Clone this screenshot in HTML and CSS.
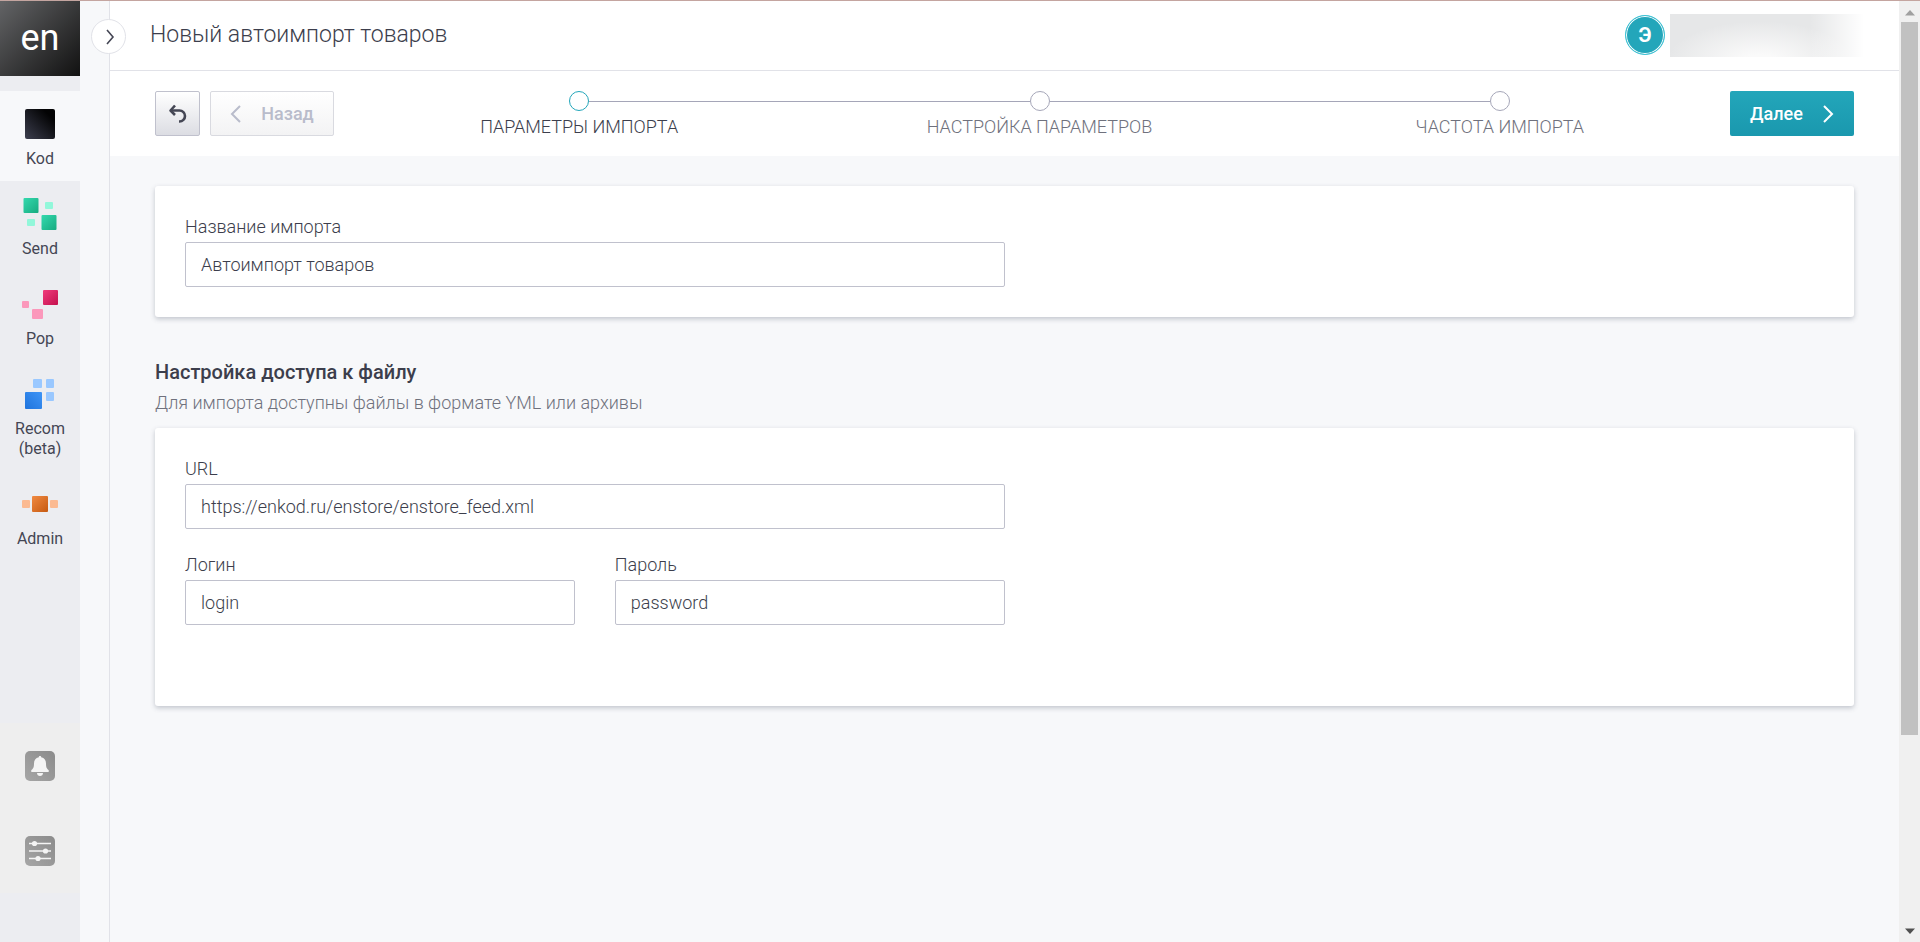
FILE: index.html
```html
<!DOCTYPE html>
<html lang="ru">
<head>
    <meta charset="UTF-8">
    <meta name="viewport" content="width=device-width, initial-scale=1.0">
    <title>Новый автоимпорт товаров</title>
    <link rel="stylesheet" href="styles.css">
</head>
<body>
    <div class="app">
        <nav class="sidebar">
            <a class="logo" href="#">en</a>
            <ul class="menu">
                <li>
                    <a class="menu-item active" href="#">
                        <svg class="menu-icon" viewBox="0 0 36 36">
                            <defs><linearGradient id="kod" x1="0" y1="1" x2="1" y2="0"><stop offset="0" stop-color="#3c3e4e"/><stop offset="0.8" stop-color="#030304"/></linearGradient></defs>
                            <rect x="3" y="3" width="30" height="30" rx="2" fill="url(#kod)"/>
                        </svg>
                        <span>Kod</span>
                    </a>
                </li>
                <li>
                    <a class="menu-item" href="#">
                        <svg class="menu-icon" viewBox="0 0 36 36">
                            <defs><linearGradient id="send" x1="0" y1="0" x2="1" y2="1"><stop offset="0" stop-color="#34d9ae"/><stop offset="1" stop-color="#17ab80"/></linearGradient></defs>
                            <rect x="1.500" y="2" width="15" height="15" rx="1" fill="url(#send)"/>
                            <rect x="19.500" y="19" width="15" height="15" rx="1" fill="url(#send)"/>
                            <rect x="23" y="6" width="8" height="7" rx="1" fill="#92f7da"/>
                            <rect x="5" y="23" width="8" height="7" rx="1" fill="#92f7da"/>
                        </svg>
                        <span>Send</span>
                    </a>
                </li>
                <li>
                    <a class="menu-item" href="#">
                        <svg class="menu-icon" viewBox="0 0 36 36">
                            <defs><linearGradient id="pop" x1="0" y1="0" x2="1" y2="1"><stop offset="0" stop-color="#f03c7c"/><stop offset="1" stop-color="#c4104e"/></linearGradient></defs>
                            <rect x="21" y="4" width="15" height="15" rx="1" fill="url(#pop)"/>
                            <rect x="0" y="15" width="7" height="7" rx="1" fill="#fb98bb"/>
                            <rect x="10" y="23" width="11" height="10" rx="1" fill="#fb98bb"/>
                        </svg>
                        <span>Pop</span>
                    </a>
                </li>
                <li>
                    <a class="menu-item" href="#">
                        <svg class="menu-icon" viewBox="0 0 36 36">
                            <defs><linearGradient id="recom" x1="0" y1="1" x2="1" y2="0"><stop offset="0" stop-color="#1f74dd"/><stop offset="1" stop-color="#3e94f6"/></linearGradient></defs>
                            <rect x="3" y="16" width="17" height="17" rx="1" fill="url(#recom)"/>
                            <rect x="11" y="3" width="9" height="9" rx="1" fill="#9ac8ff"/>
                            <rect x="24" y="3" width="8" height="9" rx="1" fill="#9ac8ff"/>
                            <rect x="24" y="16" width="8" height="9" rx="1" fill="#9ac8ff"/>
                        </svg>
                        <span>Recom (beta)</span>
                    </a>
                </li>
                <li>
                    <a class="menu-item" href="#">
                        <svg class="menu-icon" viewBox="0 0 36 36">
                            <defs><linearGradient id="admin" x1="0" y1="0" x2="1" y2="1"><stop offset="0" stop-color="#f08a42"/><stop offset="1" stop-color="#c65a12"/></linearGradient></defs>
                            <rect x="10" y="10" width="16" height="16" rx="1" fill="url(#admin)"/>
                            <rect x="0" y="14" width="8" height="8" rx="1" fill="#fbba92"/>
                            <rect x="28" y="14" width="8" height="8" rx="1" fill="#fbba92"/>
                        </svg>
                        <span>Admin</span>
                    </a>
                </li>
            </ul>
            <div class="tools">
                <button class="tool" type="button" aria-label="Уведомления">
                    <svg viewBox="0 0 30 30" width="30" height="30">
                        <defs><linearGradient id="tool" x1="1" y1="0" x2="0" y2="1"><stop offset="0" stop-color="#8b8b8b"/><stop offset="1" stop-color="#a6a6a6"/></linearGradient></defs>
                        <rect width="30" height="30" rx="5" fill="url(#tool)"/>
                        <path d="M15 5c.8 0 1.200.5 1.200 1.300C19.500 7 21 9.500 21 12.500c0 4 .8 5 2.500 6.500.6.600.4 2-.5 2H7c-.9 0-1.100-1.400-.5-2C8.200 17.500 9 16.500 9 12.500c0-3 1.500-5.500 4.800-6.200C13.800 5.500 14.200 5 15 5z" fill="#f4f4f4"/>
                        <path d="M12 22h6c0 1.700-1.300 3-3 3s-3-1.300-3-3z" fill="#f4f4f4"/>
                    </svg>
                </button>
                <button class="tool" type="button" aria-label="Настройки">
                    <svg viewBox="0 0 30 30" width="30" height="30">
                        <rect width="30" height="30" rx="5" fill="url(#tool)"/>
                        <path d="M4 7.500h22M4 15h22M4 22.500h22" stroke="#f4f4f4" stroke-width="1.600"/>
                        <circle cx="9.500" cy="7.500" r="2.600" fill="#f4f4f4"/>
                        <circle cx="20.500" cy="15" r="2.600" fill="#f4f4f4"/>
                        <circle cx="13" cy="22.500" r="2.600" fill="#f4f4f4"/>
                    </svg>
                </button>
            </div>
        </nav>

        <div class="rail">
            <button class="rail-toggle" type="button" aria-label="Развернуть меню">
                <svg viewBox="0 0 10 16" width="10" height="16"><path d="M2 1l6 7-6 7" fill="none" stroke="#444654" stroke-width="1.600"/></svg>
            </button>
        </div>

        <main class="main">
            <header class="header">
                <h1>Новый автоимпорт товаров</h1>
                <div class="user">
                    <div class="avatar">Э</div>
                    <div class="user-name"></div>
                </div>
            </header>

            <div class="toolbar">
                <button class="btn btn-undo" type="button" aria-label="Отменить">
                    <svg viewBox="0 0 20 20" width="20" height="20" fill="none" stroke="#444654" stroke-width="2.600"><path d="M3 6.500h8.500a5.500 5.500 0 0 1 0 11H11"/><path d="M7 1.500L2.500 6.500L7 11" stroke-linejoin="round"/></svg>
                </button>
                <button class="btn btn-back" type="button" disabled>
                    <svg viewBox="0 0 12 18" width="12" height="18" fill="none" stroke="currentColor" stroke-width="2"><path d="M10 1L2 9l8 8"/></svg>
                    Назад
                </button>
                <ol class="steps">
                    <li class="step current">
                        <div class="track"><span class="dot"></span></div>
                        Параметры импорта
                    </li>
                    <li class="step">
                        <div class="track"><span class="dot"></span></div>
                        Настройка параметров
                    </li>
                    <li class="step">
                        <div class="track"><span class="dot"></span></div>
                        Частота импорта
                    </li>
                </ol>
                <button class="btn btn-next" type="button">
                    Далее
                    <svg viewBox="0 0 12 18" width="12" height="18" fill="none" stroke="currentColor" stroke-width="2"><path d="M2 1l8 8-8 8"/></svg>
                </button>
            </div>

            <form class="content">
                <section class="card">
                    <div class="fields">
                        <div class="field wide">
                            <label for="name">Название импорта</label>
                            <input id="name" type="text" value="Автоимпорт товаров">
                        </div>
                    </div>
                </section>

                <h2>Настройка доступа к файлу</h2>
                <p class="hint">Для импорта доступны файлы в формате YML или архивы</p>

                <section class="card card-access">
                    <div class="fields">
                        <div class="field wide">
                            <label for="url">URL</label>
                            <input id="url" type="text" value="https://enkod.ru/enstore/enstore_feed.xml">
                        </div>
                        <div class="field">
                            <label for="login">Логин</label>
                            <input id="login" type="text" value="login">
                        </div>
                        <div class="field">
                            <label for="password">Пароль</label>
                            <input id="password" type="text" value="password">
                        </div>
                    </div>
                </section>
            </form>
        </main>

        <div class="scrollbar">
            <svg viewBox="0 0 10 6" width="10" height="6"><path d="M0 5.500L5 0l5 5.500z" fill="#a0a0a0"/></svg>
            <div class="scroll-track"><div class="scroll-thumb"></div></div>
            <svg viewBox="0 0 10 6" width="10" height="6"><path d="M0 .5L5 6l5-5.500z" fill="#505050"/></svg>
        </div>
    </div>
</body>
</html>
```
FILE: styles.css
```css
* {
    box-sizing: border-box;
}
body {
    margin: 0;
    font-family: Roboto, sans-serif;
    font-size: 18px;
    font-weight: 350;
    line-height: 20px;
    color: #3c3e4c;
    background-color: #f7f8fa;
}
h1, h2, p, ul, ol {
    margin: 0;
    padding: 0;
    font-weight: 350;
}
ul, ol {
    list-style: none;
}
button, input {
    font: inherit;
    color: inherit;
}
svg {
    display: block;
}
.app {
    display: flex;
    min-height: 100vh;
    border-top: 1px solid #c4a5a0;
}

/* left menu */
.sidebar {
    display: flex;
    flex-direction: column;
    width: 80px;
    padding-bottom: 49px;
    background-color: #ecedf1;
}
.logo {
    height: 75px;
    margin-bottom: 15px;
    font-size: 36px;
    font-weight: 400;
    line-height: 74px;
    text-align: center;
    text-decoration: none;
    color: #fff;
    background: linear-gradient(135deg, #636466, #111);
}
.menu-item {
    display: flex;
    flex-direction: column;
    align-items: center;
    gap: 7px;
    min-height: 90px;
    padding: 15px 10px 12px;
    font-size: 16px;
    font-weight: 400;
    text-align: center;
    text-decoration: none;
    color: #444654;
}
.menu-item.active {
    background-color: #f7f8fa;
}
.menu-icon {
    width: 36px;
    height: 36px;
}
.tools {
    margin-top: auto;
    background-color: #eee;
}
.tool {
    display: flex;
    align-items: center;
    justify-content: center;
    width: 100%;
    height: 85px;
    padding: 0;
    border: 0;
    background: none;
}
.rail {
    position: relative;
    width: 30px;
    border-right: 1px solid #e1e2e8;
}
.rail-toggle {
    position: absolute;
    top: 18px;
    right: -17px;
    display: flex;
    align-items: center;
    justify-content: center;
    width: 35px;
    height: 35px;
    padding: 0 0 0 3px;
    border: 1px solid #e1e2e8;
    border-radius: 50%;
    background-color: #fff;
}

/* page */
.main {
    flex: 1;
}
.header {
    display: flex;
    align-items: center;
    justify-content: space-between;
    height: 70px;
    padding: 0 29px 1px 40px;
    border-bottom: 1px solid #e1e2e8;
    background-color: #fff;
}
h1 {
    padding-bottom: 1px;
    font-size: 23px;
    line-height: 28px;
}
.user {
    display: flex;
    align-items: center;
    gap: 5px;
}
.avatar {
    width: 40px;
    height: 40px;
    border: 1px solid #3fc3d5;
    border-radius: 50%;
    font-size: 20px;
    font-weight: 700;
    line-height: 38px;
    text-align: center;
    color: #fff;
    background-color: #23a6ba;
    box-shadow: inset 0 0 0 1px #fff;
}
.user-name {
    width: 200px;
    height: 43px;
    background: linear-gradient(90deg, transparent 70%, #fff 97%), radial-gradient(ellipse at 45% 110%, #fafafa 10%, transparent 60%), #e6e7e8;
}
.toolbar {
    display: flex;
    padding: 20px 45px;
    background-color: #fff;
}
.btn {
    display: flex;
    align-items: center;
    justify-content: center;
    gap: 19px;
    width: 124px;
    height: 45px;
    padding: 0;
    border: 1px solid #c0c1cd;
    border-radius: 2px;
    font-weight: 500;
    background: linear-gradient(#fff, #dcdde3);
}
.btn-undo {
    width: 45px;
    margin-right: 10px;
}
.btn-back {
    margin-right: 15px;
    border-color: #d9dae0;
    color: #b9bccb;
    background: linear-gradient(#fff, #f3f3f4);
}
.btn-next {
    border: 0;
    color: #fff;
    background: linear-gradient(#23a6ba, #1a98ae);
}
.steps {
    display: flex;
    flex: 1;
}
.step {
    flex: 1;
    line-height: 18px;
    text-align: center;
    text-transform: uppercase;
    color: #6f717d;
}
.track {
    display: flex;
    align-items: center;
    margin-bottom: 7px;
}
.track::before,
.track::after {
    content: "";
    flex: 1;
    height: 1px;
    background-color: #a5a6b8;
}
.step:first-child .track::before,
.step:last-child .track::after {
    background: none;
}
.dot {
    width: 20px;
    height: 20px;
    border: 1px solid #a5a6b8;
    border-radius: 50%;
}
.step.current {
    color: #3c3e4c;
}
.step.current .dot {
    border-color: #23a6ba;
}

/* forms */
.content {
    padding: 30px 45px;
}
.card {
    padding: 30px;
    border-radius: 3px;
    background-color: #fff;
    box-shadow: 0 2px 5px rgba(68, 80, 100, 0.3);
}
.card-access {
    padding-bottom: 81px;
}
.fields {
    display: grid;
    grid-template-columns: 1fr 1fr;
    gap: 25px 40px;
    width: 50%;
}
.wide {
    grid-column: 1 / -1;
}
.field label {
    display: block;
    margin-bottom: 5px;
    line-height: 21px;
}
.field input {
    display: block;
    width: 100%;
    height: 45px;
    padding: 0 15px;
    border: 1px solid #c0c1cd;
    border-radius: 2px;
    background-color: #fff;
}
h2 {
    margin-top: 43px;
    font-size: 20px;
    line-height: 24px;
    font-weight: 500;
}
.hint {
    margin: 9px 0 15px;
    color: #6f717d;
}

/* scrollbar */
.scrollbar {
    display: flex;
    flex-direction: column;
    align-items: center;
    width: 21px;
    padding: 9px 0 8px;
    background-color: #f0f0f0;
}
.scroll-track {
    flex: 1;
    width: 17px;
    padding: 6px 0 15px;
}
.scroll-thumb {
    height: 80%;
    background-color: #c1c1c1;
}
```
